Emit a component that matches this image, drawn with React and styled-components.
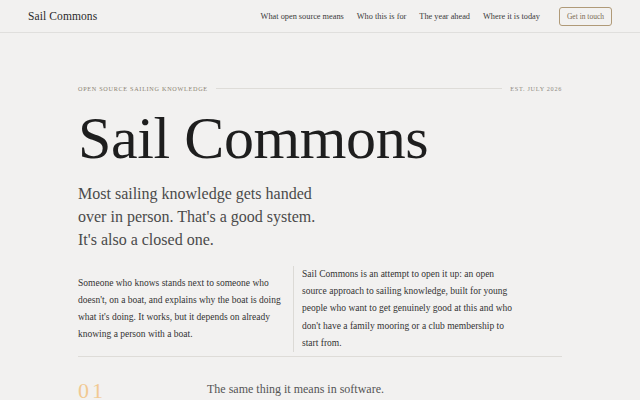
import React from 'react'
import styled, { createGlobalStyle } from 'styled-components'

const GlobalStyle = createGlobalStyle`
    html, body {
        margin: 0;
        padding: 0;
        background: #f2f1f0;
    }
    body {
        font-family: "Liberation Serif", "Times New Roman", serif;
        color: #222;
        width: 640px;
        height: 400px;
        overflow: hidden;
    }
`

const Header = styled.header`
    height: 32px;
    display: flex;
    align-items: center;
    justify-content: space-between;
    padding: 0 28px;
    border-bottom: 1px solid #e0dfdd;
`

const Logo = styled.div`
    font-size: 11.5px;
    color: #2a2a2a;
    letter-spacing: 0.1px;
`

const Nav = styled.nav`
    display: flex;
    align-items: center;
    gap: 13px;
`

const NavLink = styled.a`
    font-size: 8.3px;
    color: #3a3a3a;
    text-decoration: none;
`

const ContactButton = styled.a`
    margin-left: 6px;
    font-size: 7.5px;
    color: #7a6a50;
    border: 1px solid #b09a78;
    border-radius: 3px;
    padding: 4px 7px;
    text-decoration: none;
`

const Main = styled.main`
    padding: 52px 78px 0 78px;
`

const Eyebrow = styled.div`
    display: flex;
    align-items: center;
    gap: 8px;
    font-size: 6.2px;
    letter-spacing: 0.7px;
    color: #8c8470;
    text-transform: uppercase;
`

const Rule = styled.div`
    flex: 1;
    height: 1px;
    background: #dedcd8;
`

const EyebrowRight = styled.span`
    color: #8e8a82;
`

const Title = styled.h1`
    margin: 12px 0 0 0;
    font-weight: 400;
    font-size: 60px;
    line-height: 68px;
    letter-spacing: -0.4px;
    color: #1e1e1e;
`

const Lede = styled.p`
    margin: 10px 0 0 0;
    max-width: 248px;
    font-size: 16px;
    line-height: 23px;
    color: #4a4a4a;
`

const Columns = styled.div`
    margin-top: 15px;
    display: grid;
    grid-template-columns: 206px 1fr;
    column-gap: 9px;
    align-items: center;
`

const Para = styled.p`
    margin: 0;
    font-size: 9.5px;
    line-height: 17.2px;
    color: #333;
    max-width: ${({ narrow }) => (narrow ? '212px' : 'none')};
    padding-left: ${({ bordered }) => (bordered ? '8px' : '0')};
    border-left: ${({ bordered }) => (bordered ? '1px solid #dcdad6' : 'none')};
`

const Divider = styled.div`
    margin-top: 4px;
    height: 1px;
    background: #dedcd8;
`

const Section = styled.div`
    display: flex;
    align-items: flex-start;
    margin-top: 23px;
`

const Number = styled.div`
    width: 129px;
    font-size: 22px;
    line-height: 1;
    letter-spacing: 3px;
    color: #f1c992;
`

const SectionLead = styled.div`
    padding-top: 3px;
    font-size: 12px;
    line-height: 1;
    color: #555;
`

const links = ['What open source means', 'Who this is for', 'The year ahead', 'Where it is today']

export default function App() {
    return (
        <>
            <GlobalStyle />
            <Header>
                <Logo>Sail Commons</Logo>
                <Nav>
                    {links.map((l) => (
                        <NavLink key={l}>{l}</NavLink>
                    ))}
                    <ContactButton>Get in touch</ContactButton>
                </Nav>
            </Header>
            <Main>
                <Eyebrow>
                    <span>Open source sailing knowledge</span>
                    <Rule />
                    <EyebrowRight>Est. July 2026</EyebrowRight>
                </Eyebrow>
                <Title>Sail Commons</Title>
                <Lede>
                    Most sailing knowledge gets handed over in person. That's a good system. It's also a closed one.
                </Lede>
                <Columns>
                    <Para>
                        Someone who knows stands next to someone who doesn't, on a boat, and explains why the boat is doing what it's doing. It works, but it depends on already knowing a person with a boat.
                    </Para>
                    <Para bordered narrow>
                        Sail Commons is an attempt to open it up: an open source approach to sailing knowledge, built for young people who want to get genuinely good at this and who don't have a family mooring or a club membership to start from.
                    </Para>
                </Columns>
                <Divider />
                <Section>
                    <Number>01</Number>
                    <SectionLead>The same thing it means in software.</SectionLead>
                </Section>
            </Main>
        </>
    )
}
